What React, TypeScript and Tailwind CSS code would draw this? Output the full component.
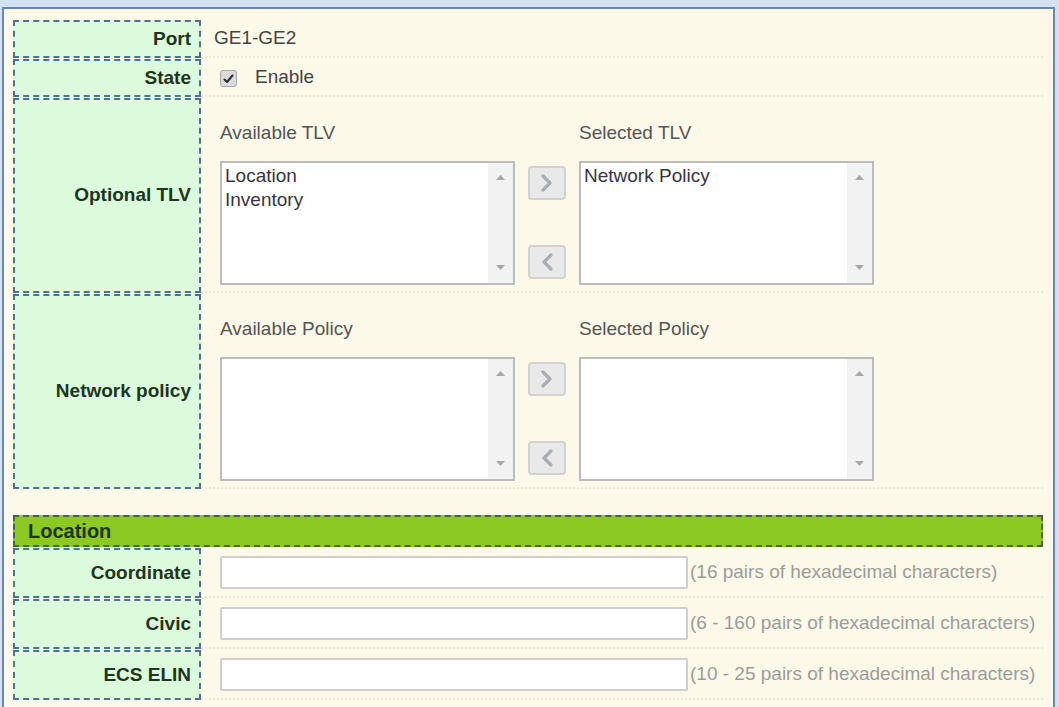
import React from 'react';

const font = "font-['Liberation_Sans',Arial,sans-serif]";

const LabelCell = ({ children }: { children: React.ReactNode }) => (
    <div className="w-[188px] shrink-0 border-2 border-dashed border-[#4f7290] bg-[#dcfadc] flex items-center justify-end pr-[8px] text-[19px] font-bold text-[#1e3520]">
        {children}
    </div>
);

const Row = ({ label, height, children }: { label: string; height: string; children: React.ReactNode }) => (
    <div className={`flex ${height}`}>
        <LabelCell>{label}</LabelCell>
        <div className="flex-1 border-b-2 border-dotted border-[#ece8d5]">{children}</div>
    </div>
);

const ScrollArrow = ({ up }: { up?: boolean }) => (
    <svg width="9" height="5" viewBox="0 0 9 5">
        <polygon points={up ? '0,5 4.5,0 9,5' : '0,0 4.5,5 9,0'} fill="#a8a8a8" />
    </svg>
);

const ListBox = ({ items }: { items: string[] }) => (
    <div className="w-[295px] h-[124px] bg-white border-2 border-[#bcbcbc] flex">
        <div className="flex-1 pl-[3px] pt-[1px] text-[19px] leading-[24px] text-[#3a3440]">
            {items.map((item) => (
                <div key={item}>{item}</div>
            ))}
        </div>
        <div className="w-[25px] bg-[#f2f2f2] flex flex-col items-center justify-between pt-[12px] pb-[13px]">
            <ScrollArrow up />
            <ScrollArrow />
        </div>
    </div>
);

const MoveButton = ({ dir }: { dir: 'right' | 'left' }) => (
    <button className="w-[38px] h-[34px] rounded-[4px] border-2 border-[#d2d2d2] bg-[#e9e9e9] flex items-center justify-center">
        <svg width="12" height="18" viewBox="0 0 12 18" fill="none" stroke="#a9aeb4" strokeWidth="3.2" strokeLinecap="round" strokeLinejoin="round">
            <polyline points={dir === 'right' ? '2,2 9,9 2,16' : '10,2 3,9 10,16'} />
        </svg>
    </button>
);

const DualList = ({ leftTitle, rightTitle, left, right }: { leftTitle: string; rightTitle: string; left: string[]; right: string[] }) => (
    <div className="flex pl-[19px] pt-[24px] text-[#555]">
        <div className="flex flex-col">
            <div className="text-[19px] leading-[22px] mb-[17px]">{leftTitle}</div>
            <ListBox items={left} />
        </div>
        <div className="mx-[13px] mt-[39px] h-[124px] flex flex-col justify-between pt-[5px] pb-[6px]">
            <MoveButton dir="right" />
            <MoveButton dir="left" />
        </div>
        <div className="flex flex-col">
            <div className="text-[19px] leading-[22px] mb-[17px]">{rightTitle}</div>
            <ListBox items={right} />
        </div>
    </div>
);

const HexField = ({ hint }: { hint: string }) => (
    <div className="h-full flex items-center pl-[19px]">
        <input className="w-[468px] h-[33px] bg-white border-2 border-[#cfcfcf] rounded-[2px] outline-none" />
        <span className="ml-[2px] text-[19px] text-[#9c9c9c] whitespace-nowrap">{hint}</span>
    </div>
);

export default function App() {
    return (
        <div className={`${font} w-[1059px] h-[707px] bg-[#d3e2f2] pl-[2px] pt-[7px] pr-[4px] flex`}>
            <div className="flex-1 border-t-2 border-x-2 border-[#6a87b2] bg-[#fcf9e8] pl-[9px] pt-[11px] pr-[10px]">
                <div className="flex flex-col gap-[1px]">
                    <Row label="Port" height="h-[38px]">
                        <div className="h-full flex items-center pl-[13px] text-[19px] text-[#444]">GE1-GE2</div>
                    </Row>
                    <Row label="State" height="h-[38px]">
                        <div className="h-full flex items-center pl-[19px] text-[19px] text-[#444]">
                            <span className="w-[17px] h-[17px] rounded-[3px] border border-[#a9a9a9] bg-[#dadada] flex items-center justify-center mt-[3px]">
                                <svg width="11" height="10" viewBox="0 0 11 10" fill="none" stroke="#2e2e2e" strokeWidth="2" strokeLinecap="round" strokeLinejoin="round">
                                    <polyline points="1.5,5.5 4,8 9.5,1.5" />
                                </svg>
                            </span>
                            <span className="ml-[18px]">Enable</span>
                        </div>
                    </Row>
                    <Row label="Optional TLV" height="h-[195px]">
                        <DualList leftTitle="Available TLV" rightTitle="Selected TLV" left={['Location', 'Inventory']} right={['Network Policy']} />
                    </Row>
                    <Row label="Network policy" height="h-[195px]">
                        <DualList leftTitle="Available Policy" rightTitle="Selected Policy" left={[]} right={[]} />
                    </Row>
                </div>

                <div className="mt-[26px] flex flex-col gap-[1px]">
                    <div className="h-[32px] border-2 border-dashed border-[#4a633c] bg-[#8cc923] flex items-center pl-[13px] text-[20px] font-bold text-[#1d3410]">
                        Location
                    </div>
                    <Row label="Coordinate" height="h-[50px]">
                        <HexField hint="(16 pairs of hexadecimal characters)" />
                    </Row>
                    <Row label="Civic" height="h-[50px]">
                        <HexField hint="(6 - 160 pairs of hexadecimal characters)" />
                    </Row>
                    <Row label="ECS ELIN" height="h-[50px]">
                        <HexField hint="(10 - 25 pairs of hexadecimal characters)" />
                    </Row>
                </div>
            </div>
        </div>
    );
}
